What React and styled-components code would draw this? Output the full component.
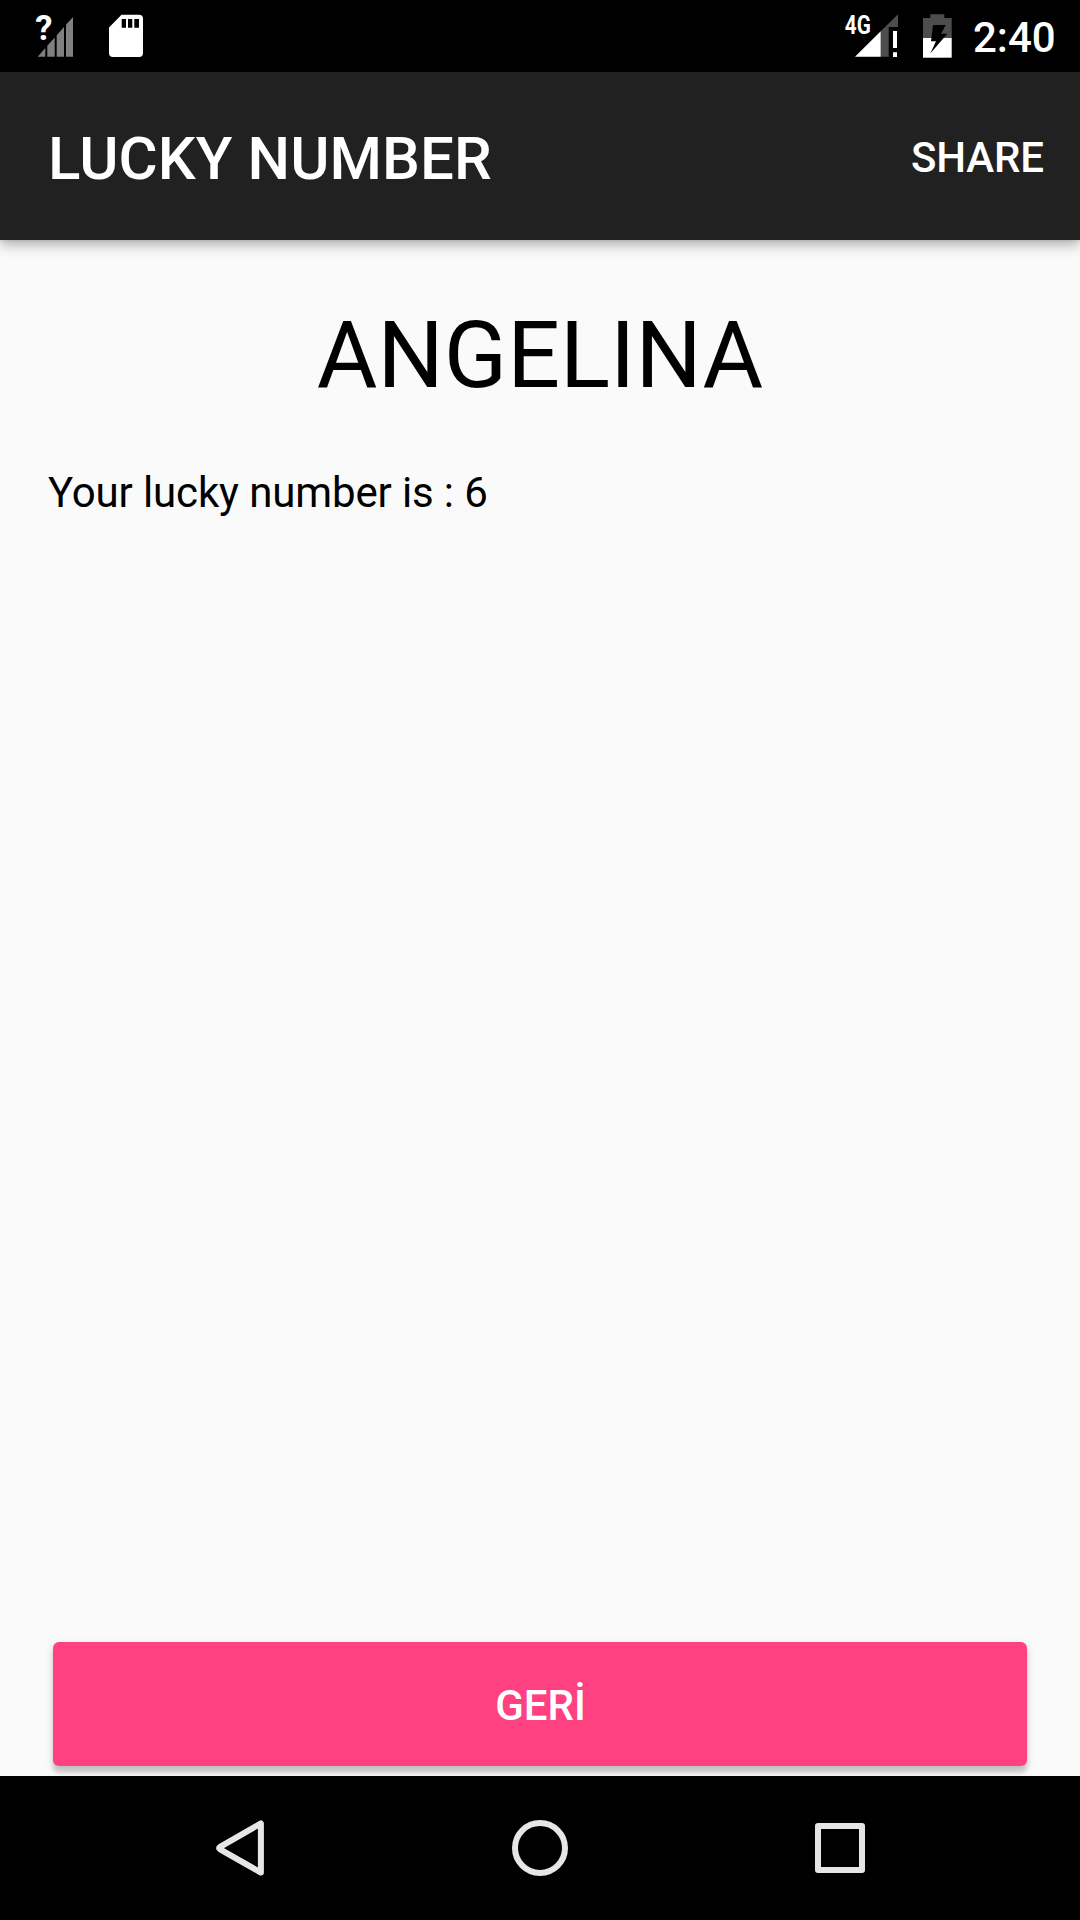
import React from "react";
import styled, { createGlobalStyle } from "styled-components";

const GlobalStyle = createGlobalStyle`
  body {
    margin: 0;
    background: #000;
    font-family: Roboto, "Liberation Sans", sans-serif;
  }
`;

const ScreenEl = styled.div`
  display: flex;
  flex-direction: column;
  width: 1080px;
  height: 1920px;
  overflow: hidden;
  background: #fafafa;
`;

const StatusBarEl = styled.div`
  display: flex;
  justify-content: space-between;
  height: 72px;
  background: #000;
  color: #fff;
`;

const StatusGroupEl = styled.div`
  display: flex;
  align-items: flex-start;
`;

const StatusIconEl = styled.svg`
  display: block;
  flex: none;
  height: 72px;
`;

const IconTextEl = styled.text`
  fill: #fff;
  font-family: Roboto, sans-serif;
  font-weight: 700;
  font-size: ${({ $size }) => $size}px;
`;

const ClockEl = styled.div`
  width: 107px;
  font-size: 42px;
  font-weight: 500;
  line-height: 75px;
`;

const AppBarEl = styled.header`
  position: relative;
  display: flex;
  flex: none;
  justify-content: space-between;
  box-sizing: border-box;
  height: 168px;
  padding: 0 36px 0 48px;
  background: #212121;
  color: #fff;
  box-shadow: 0 5px 12px rgba(0, 0, 0, 0.3), 0 0 3px rgba(0, 0, 0, 0.12);
`;

const TitleEl = styled.h1`
  margin: 0;
  font-size: 60px;
  font-weight: 500;
  letter-spacing: 0.08px;
  line-height: 173px;
`;

const ActionEl = styled.button`
  height: 172px;
  padding: 0;
  border: 0;
  background: none;
  color: inherit;
  font-family: inherit;
  font-size: 42px;
  font-weight: 500;
  letter-spacing: -0.1px;
  line-height: 172px;
`;

const ContentEl = styled.main`
  display: flex;
  flex: 1;
  flex-direction: column;
  min-height: 0;
  overflow: hidden;
  padding: 49px 48px 0;
`;

const NameEl = styled.h2`
  margin: 0;
  font-size: 93px;
  font-weight: 400;
  line-height: 134px;
  text-align: center;
`;

const ResultEl = styled.p`
  margin: 42px 0 0;
  font-size: 42px;
  letter-spacing: -0.13px;
  line-height: 56px;
`;

const BackButtonEl = styled.button`
  flex: none;
  height: 124px;
  margin: auto 5px 10px;
  padding: 3px 0 0 1px;
  border: 0;
  border-radius: 6px;
  background: #ff4081;
  color: #fff;
  font-family: inherit;
  font-size: 42px;
  font-weight: 500;
  line-height: 121px;
  box-shadow: 0 7px 4px rgba(0, 0, 0, 0.14), 0 3px 9px rgba(0, 0, 0, 0.14);
`;

const NavBarEl = styled.nav`
  display: flex;
  flex: none;
  align-items: center;
  justify-content: center;
  gap: 228px;
  height: 144px;
  background: #000;
`;

const NavIconEl = styled.svg`
  display: block;
  width: 72px;
  height: 72px;
  fill: none;
  stroke: #e6e6e6;
  stroke-width: 6;
`;

const UnknownSignalIcon = () => (
  <StatusIconEl width="90" viewBox="0 0 90 72">
    <path
      fill="#808080"
      d="M37.7 56.7 45.3 48V56.7ZM47.3 56.7V45.8L54.7 37.5V56.7ZM56.7 56.7V35.3L64 27V56.7ZM66 56.7V24.8L73 16.9V56.7Z"
    />
    <IconTextEl $size={34.5} x="35.3" y="39.9">
      ?
    </IconTextEl>
  </StatusIconEl>
);

const SdCardIcon = () => (
  <StatusIconEl width="72" viewBox="90 0 72 72">
    <path
      fill="#fff"
      fillRule="evenodd"
      d="M121.5 14.7H139Q143 14.7 143 18.7V53Q143 57 139 57H113Q109 57 109 53V27.4ZM121.7 19V27.7H126V19ZM128 19V27.7H132.3V19ZM134.3 19V27.7H139V19Z"
    />
  </StatusIconEl>
);

const MobileSignalIcon = () => (
  <StatusIconEl width="70" viewBox="840 0 70 72">
    <path fill="#4d4d4d" d="M880.7 31.3 898 14.3V27H888.7V56.7H880.7Z" />
    <path fill="#fff" d="M855 56.7 880.7 31.3V56.7ZM893 31H897V48H893ZM893 52.3H897V57H893Z" />
    <IconTextEl
      $size={25.5}
      x="844.8"
      y="33.6"
      textLength="26"
      lengthAdjust="spacingAndGlyphs"
    >
      4G
    </IconTextEl>
  </StatusIconEl>
);

const BatteryIcon = () => (
  <StatusIconEl width="63" viewBox="910 0 63 72">
    <path fill="#4d4d4d" d="M923 18H930.3V14.3H944.3V18H951.7V38H923Z" />
    <path fill="#fff" d="M923 38H951.7V57.7H923Z" />
    <path d="M933 25H945.7L941 33.7H947.3L930.3 53.5 936 41.3H931Z" />
  </StatusIconEl>
);

const StatusBar = () => (
  <StatusBarEl>
    <StatusGroupEl>
      <UnknownSignalIcon />
      <SdCardIcon />
    </StatusGroupEl>
    <StatusGroupEl>
      <MobileSignalIcon />
      <BatteryIcon />
      <ClockEl>2:40</ClockEl>
    </StatusGroupEl>
  </StatusBarEl>
);

const NavBar = () => (
  <NavBarEl>
    <NavIconEl viewBox="0 0 72 72" strokeLinejoin="round">
      <path d="M56.9 11.4V60.6L16.1 37.3Q14 36.2 16.1 34.9Z" />
    </NavIconEl>
    <NavIconEl viewBox="0 0 72 72">
      <circle cx="36" cy="36" r="25" />
    </NavIconEl>
    <NavIconEl viewBox="0 0 72 72" strokeLinejoin="round">
      <rect x="14" y="14" width="44" height="44" />
    </NavIconEl>
  </NavBarEl>
);

export default function App() {
  return (
    <>
      <GlobalStyle />
      <ScreenEl>
        <StatusBar />
        <AppBarEl>
          <TitleEl>LUCKY NUMBER</TitleEl>
          <ActionEl>SHARE</ActionEl>
        </AppBarEl>
        <ContentEl>
          <NameEl>ANGELINA</NameEl>
          <ResultEl>Your lucky number is : 6</ResultEl>
          <BackButtonEl>GERİ</BackButtonEl>
        </ContentEl>
        <NavBar />
      </ScreenEl>
    </>
  );
}
